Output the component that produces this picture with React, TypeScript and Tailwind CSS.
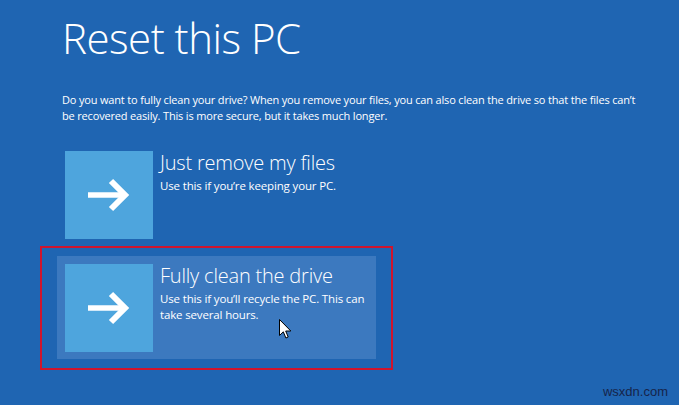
import React from "react";

function Arrow() {
  return (
    <svg width="42" height="34" viewBox="0 0 42 34" fill="none">
      <line x1="0" y1="17" x2="36" y2="17" stroke="white" strokeWidth="5.5" />
      <polyline points="23,3 37,17 23,31" stroke="white" strokeWidth="6" strokeLinejoin="miter" strokeLinecap="butt" fill="none" />
    </svg>
  );
}

function Cursor() {
  return (
    <svg width="13" height="21" viewBox="0 0 13 21">
      <path d="M0.5 0.5 L0.5 16.5 L4.3 12.8 L6.9 19 L9.2 18 L6.7 12 L11.8 12 Z" fill="white" stroke="black" strokeWidth="1" strokeLinejoin="miter" />
    </svg>
  );
}

function Tile({ title, lines, active }: { title: string; lines: string[]; active?: boolean }) {
  return (
    <div className={`flex w-[319px] h-[103px] pl-[8px] pt-[8px] ${active ? "bg-[#3c79bf]" : ""}`}>
      <div className="w-[88px] h-[88px] bg-[#4ea5dd] flex items-center justify-center shrink-0">
        <Arrow />
      </div>
      <div className="pl-[7px]">
        <div className="text-[20px] leading-[24px] font-light text-white tracking-[-0.2px] whitespace-nowrap">{title}</div>
        <div className="mt-[3px] text-[11.5px] leading-[16px] text-white tracking-[-0.15px] whitespace-nowrap">
          {lines.map((l, i) => (
            <div key={i}>{l}</div>
          ))}
        </div>
      </div>
    </div>
  );
}

export default function App() {
  return (
    <div
      className="relative w-[679px] h-[405px] overflow-hidden bg-[#1f65b2]"
      style={{ fontFamily: '"Open Sans", "Noto Sans", sans-serif' }}
    >
      <div className="pl-[62px] pt-[12px]">
        <h1 className="text-[42px] leading-[52px] font-light text-white tracking-[-0.5px]">Reset this PC</h1>
        <div className="mt-[28px] text-[11px] leading-[16px] text-white tracking-[-0.17px] whitespace-nowrap">
          <div>Do you want to fully clean your drive? When you remove your files, you can also clean the drive so that the files can’t</div>
          <div>be recovered easily. This is more secure, but it takes much longer.</div>
        </div>
      </div>
      <div className="pl-[57px] mt-[19px] flex flex-col gap-[10px]">
        <Tile title="Just remove my files" lines={["Use this if you’re keeping your PC."]} />
        <div className="relative">
          <Tile
            active
            title="Fully clean the drive"
            lines={["Use this if you’ll recycle the PC. This can", "take several hours."]}
          />
          <div className="absolute left-[-17px] top-[-10px] w-[353px] h-[124px] border-2 border-[#d0152d]" />
          <div className="absolute left-[222px] top-[63px]">
            <Cursor />
          </div>
        </div>
      </div>
      <div
        className="absolute right-[11px] bottom-[5px] text-[13px] leading-[16px] text-[#16244a]"
        style={{ fontFamily: '"Liberation Sans", Arial, sans-serif' }}
      >
        wsxdn.com
      </div>
    </div>
  );
}
